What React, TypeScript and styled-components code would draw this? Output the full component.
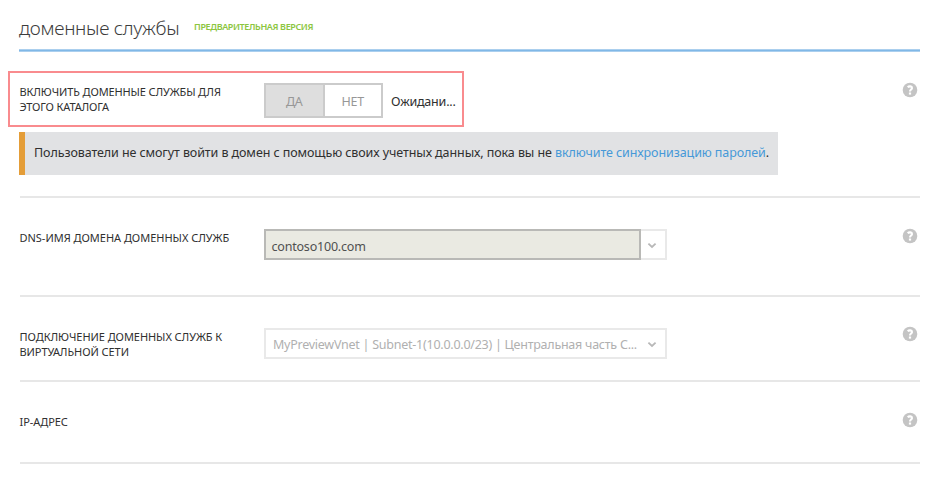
import React from 'react';
import styled, { createGlobalStyle } from 'styled-components';

const GlobalStyle = createGlobalStyle`
  * { box-sizing: border-box; }
  body {
    margin: 0;
    background: #fff;
    color: #303030;
    font-family: "Noto Sans", "Open Sans", sans-serif;
    font-size: 12.5px;
  }
`;

const Page = styled.main`
  width: 938px;
  height: 492px;
  padding: 0 18px 0 19px;
  overflow: hidden;
  white-space: nowrap;
`;

const Header = styled.header`
  display: flex;
  align-items: flex-start;
  height: 52px;
  border-bottom: 1px solid #abcfee;
  box-shadow: inset 0 -1px #80b8e7, inset 0 -2px #abcfee;
`;

const Title = styled.h1`
  width: 175px;
  margin: 14px 0 0;
  font-size: 19px;
  font-weight: 300;
  line-height: 28px;
  letter-spacing: -0.3px;
  color: #3c3c3c;
`;

const PreviewTag = styled.span`
  margin-top: 20px;
  font-size: 9px;
  font-weight: 600;
  line-height: 14px;
  letter-spacing: -0.38px;
  color: #8cc63f;
`;

const Section = styled.section<{ $height: number }>`
  display: flex;
  justify-content: space-between;
  height: ${(p) => p.$height}px;
  margin-left: 1px;
  border-bottom: 2px solid #e7e7e7;
`;

const Content = styled.div`
  display: flex;
  flex-direction: column;
`;

const Field = styled.div<{ $top: number }>`
  display: flex;
  align-items: flex-start;
  padding-top: ${(p) => p.$top}px;
`;

const Highlight = styled.div`
  display: flex;
  align-items: flex-start;
  width: 456px;
  height: 56px;
  margin: 19px 0 0 -12px;
  padding: 10px 0 0 10px;
  border: 2px solid #f98b8e;
`;

const Label = styled.div<{ $spacing: number }>`
  width: 244.5px;
  margin-left: -0.5px;
  padding-top: 1px;
  font-size: 11px;
  line-height: 15px;
  letter-spacing: ${(p) => p.$spacing}px;
  white-space: pre-line;
`;

const Toggle = styled.div`
  display: flex;
  width: 119px;
  height: 35px;
  border: 2px solid #cbcbcb;
`;

const Option = styled.div<{ $selected?: boolean }>`
  display: flex;
  flex: 1;
  align-items: center;
  justify-content: center;
  padding-top: 1px;
  letter-spacing: -0.2px;
  color: #979797;
  background: ${(p) => (p.$selected ? '#dedede' : '#fff')};
  & + & { border-left: 2px solid #cbcbcb; }
`;

const Status = styled.span`
  margin: 9px 0 0 8px;
  line-height: 19px;
  letter-spacing: -0.2px;
`;

const Notice = styled.div`
  width: 759px;
  height: 43px;
  margin: 5px 0 0 -1px;
  padding: 11px 0 0 9px;
  border-left: 6px solid #e49d38;
  background: #e1e2e4;
  line-height: 19px;
  letter-spacing: -0.09px;
`;

const Link = styled.a`
  color: #4699d8;
`;

const Select = styled.div`
  display: flex;
  width: 403px;
  height: 31px;
  border: 2px solid #e9e9e9;
`;

const DomainValue = styled.div`
  width: 377px;
  height: 31px;
  margin: -2px 0 0 -2px;
  padding: 6px 0 0 5.5px;
  border: 2px solid #b9b9b6;
  background: #eaeae2;
  color: #505050;
  line-height: 19px;
  letter-spacing: -0.2px;
`;

const NetworkValue = styled.div`
  width: 375px;
  padding: 5px 0 0 7px;
  color: #b0b0b0;
  line-height: 19px;
  letter-spacing: -0.25px;
`;

const Arrow = styled.svg`
  width: 10px;
  height: 8px;
  margin: 10px 0 0 6px;
`;

const HelpIcon = styled.svg<{ $top: number }>`
  width: 16px;
  height: 16px;
  margin: ${(p) => p.$top}px 2px 0 0;
`;

const Chevron = () => (
  <Arrow viewBox="0 0 10 8">
    <path d="M1.4 2.6 5 6 8.6 2.6" fill="none" stroke="#b8b8b8" strokeWidth="1.8" />
  </Arrow>
);

const Help = ({ top }: { top: number }) => (
  <HelpIcon $top={top} viewBox="0 0 16 16">
    <circle cx="8" cy="8" r="7.3" fill="#c4c4c4" />
    <path d="M5.7 5.2C7 3.9 10 4 10 6.1 10 7.6 8 7.5 8 9.5" fill="none" stroke="#fff" strokeWidth="2.1" />
    <rect x="6.9" y="10.5" width="2.2" height="2.1" fill="#fff" />
  </HelpIcon>
);

export default function App() {
  return (
    <>
      <GlobalStyle />
      <Page>
        <Header>
          <Title>доменные службы</Title>
          <PreviewTag>ПРЕДВАРИТЕЛЬНАЯ ВЕРСИЯ</PreviewTag>
        </Header>
        <Section $height={146}>
          <Content>
            <Highlight>
              <Label $spacing={-0.12}>{'ВКЛЮЧИТЬ ДОМЕННЫЕ СЛУЖБЫ ДЛЯ\nЭТОГО КАТАЛОГА'}</Label>
              <Toggle>
                <Option $selected>ДА</Option>
                <Option>НЕТ</Option>
              </Toggle>
              <Status>Ожидани...</Status>
            </Highlight>
            <Notice>
              Пользователи не смогут войти в домен с помощью своих учетных данных, пока вы не{' '}
              <Link>включите синхронизацию паролей</Link>.
            </Notice>
          </Content>
          <Help top={30} />
        </Section>
        <Section $height={99}>
          <Field $top={31}>
            <Label $spacing={-0.02}>DNS-ИМЯ ДОМЕНА ДОМЕННЫХ СЛУЖБ</Label>
            <Select>
              <DomainValue>contoso100.com</DomainValue>
              <Chevron />
            </Select>
          </Field>
          <Help top={30} />
        </Section>
        <Section $height={85}>
          <Field $top={31}>
            <Label $spacing={-0.06}>{'ПОДКЛЮЧЕНИЕ ДОМЕННЫХ СЛУЖБ К\nВИРТУАЛЬНОЙ СЕТИ'}</Label>
            <Select>
              <NetworkValue>MyPreviewVnet | Subnet-1(10.0.0.0/23) | Центральная часть С...</NetworkValue>
              <Chevron />
            </Select>
          </Field>
          <Help top={29} />
        </Section>
        <Section $height={82}>
          <Field $top={31}>
            <Label $spacing={-0.06}>IP-АДРЕС</Label>
          </Field>
          <Help top={30} />
        </Section>
      </Page>
    </>
  );
}
